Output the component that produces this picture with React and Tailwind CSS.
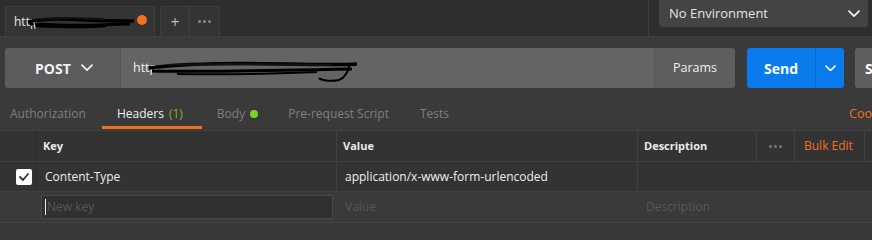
import React from "react";

const Chevron = ({ className = "", stroke = "currentColor", w = 12 }) => (
  <svg width={w} height={w * 0.6} viewBox="0 0 12 7" className={className} fill="none">
    <path d="M1 1l5 5 5-5" stroke={stroke} strokeWidth="1.8" strokeLinecap="round" strokeLinejoin="round" />
  </svg>
);

export default function App() {
  return (
    <div className="w-[872px] h-[240px] overflow-hidden bg-[#3a3a3a] font-['Open_Sans',sans-serif] text-[12px] text-[#e6e6e6]">
      {/* top bar */}
      <div className="flex h-[37px] bg-[#2e2e2e] border-b border-[#3f3f3f]">
        <div className="flex items-end pl-[5px] gap-[5px] shrink-0">
          <div className="relative flex items-center w-[150px] h-[30px] bg-[#343434] border border-b-0 border-[#3f3f3f] rounded-t-[3px] pl-[8px]">
            <span className="text-[12px] text-[#e8e8e8]">http</span>
            <svg className="absolute left-[20px] top-[5px]" width="112" height="22" viewBox="0 0 112 22">
              <path d="M2 10 C20 6, 40 7, 60 8 S90 9, 108 9" stroke="#000" strokeWidth="3.5" fill="none" />
              <path d="M4 12 C25 13, 50 14, 75 13 S95 12, 104 12" stroke="#000" strokeWidth="3" fill="none" />
              <path d="M10 14 C30 15, 55 16, 80 14" stroke="#000" strokeWidth="2.5" fill="none" />
              <path d="M6 8 C20 6, 50 6, 78 7" stroke="#111" strokeWidth="2" fill="none" />
              <path d="M8 10 L9 17" stroke="#ddd" strokeWidth="1" fill="none" />
            </svg>
            <span className="absolute right-[7px] top-[8px] w-[10px] h-[10px] rounded-full bg-[#f37020]" />
          </div>
          <div className="flex h-[30px] bg-[#343434] border border-b-0 border-[#3f3f3f] rounded-t-[3px]">
            <div className="w-[29px] flex items-center justify-center border-r border-[#3f3f3f] text-[#bbb] text-[16px] leading-none">+</div>
            <div className="w-[29px] flex items-center justify-center gap-[2px]">
              <span className="w-[3px] h-[3px] rounded-full bg-[#888]" />
              <span className="w-[3px] h-[3px] rounded-full bg-[#888]" />
              <span className="w-[3px] h-[3px] rounded-full bg-[#888]" />
            </div>
          </div>
        </div>
        <div className="flex-1" />
        <div className="w-px bg-[#3e3e3e]" />
        <div className="ml-[10px] mr-[4px] w-[209px] h-[27px] bg-[#444] rounded-b-[3px] flex items-center justify-between pl-[10px] pr-[8px] shrink-0">
          <span className="text-[13px] text-[#e3e3e3]">No Environment</span>
          <Chevron stroke="#f0f0f0" w={12} />
        </div>
      </div>

      {/* url row */}
      <div className="flex items-start h-[51px] pl-[5px] pt-[11px]">
        <div className="flex h-[40px] w-[730px] shrink-0 rounded-[3px] overflow-hidden">
          <div className="w-[116px] bg-[#5c5c5c] flex items-center pl-[30px] gap-[10px] border-r border-[#555]">
            <span className="text-[14px] font-bold text-[#f2f2f2]">POST</span>
            <Chevron stroke="#f0f0f0" w={12} />
          </div>
          <div className="relative flex-1 bg-[#646464] flex items-center pl-[12px]">
            <span className="text-[12.5px] text-[#f0f0f0]">http</span>
            <svg className="absolute left-[26px] top-[6px]" width="215" height="32" viewBox="0 0 215 32">
              <path d="M2 14 C40 9, 90 9, 140 10 S195 11, 210 10" stroke="#000" strokeWidth="3.5" fill="none" />
              <path d="M5 17 C50 18, 100 17, 150 16 S190 15, 205 15" stroke="#000" strokeWidth="3" fill="none" />
              <path d="M30 20 C80 21, 120 20, 170 18" stroke="#000" strokeWidth="2" fill="none" />
              <path d="M203 10 C201 18, 198 24, 192 26 C182 28, 174 26, 172 24" stroke="#000" strokeWidth="2" fill="none" />
              <path d="M20 11 C60 9, 110 10, 185 11" stroke="#111" strokeWidth="2" fill="none" />
            </svg>
          </div>
          <div className="w-[81px] bg-[#5e5e5e] border-l border-[#555] flex items-center justify-center">
            <span className="text-[12.5px] text-[#eee]">Params</span>
          </div>
        </div>
        <div className="ml-[12px] flex h-[40px] w-[97px] shrink-0 bg-[#097bed] rounded-[3px] overflow-hidden">
          <div className="w-[69px] flex items-center justify-center border-r border-[#0a66c2]">
            <span className="text-[14px] font-bold text-white">Send</span>
          </div>
          <div className="flex-1 flex items-center justify-center">
            <Chevron stroke="#fff" w={11} />
          </div>
        </div>
        <div className="ml-[11px] h-[40px] w-[40px] shrink-0 bg-[#5e5e5e] rounded-l-[3px] flex items-center pl-[10px]">
          <span className="text-[14px] font-bold text-white">S</span>
        </div>
      </div>

      {/* tabs row */}
      <div className="relative flex h-[43px] border-b border-[#404040]">
        <div className="flex h-full text-[12px]">
          <div className="pl-[10px] pr-[16px] h-full flex items-center pt-[10px] text-[#7f7f7f]">Authorization</div>
          <div className="relative pl-[15px] pr-[19px] h-full flex items-center pt-[10px] text-[#f0f0f0]">
            Headers <span className="ml-[5px] text-[#7ab82c]">(1)</span>
            <span className="absolute left-0 right-0 bottom-[1px] h-[3px] bg-[#f37020]" />
          </div>
          <div className="pl-[15px] pr-[30px] h-full flex items-center pt-[10px] text-[#7f7f7f]">
            Body <span className="ml-[5px] w-[8px] h-[8px] rounded-full bg-[#7ed321]" />
          </div>
          <div className="pr-[31px] h-full flex items-center pt-[10px] text-[#7f7f7f]">Pre-request Script</div>
          <div className="h-full flex items-center pt-[10px] text-[#7f7f7f]">Tests</div>
        </div>
        <div className="flex-1" />
        <div className="h-full flex items-center pt-[10px] text-[#f37020] text-[12.5px]">Coo</div>
      </div>

      {/* table */}
      <div className="bg-[#333]">
        <div className="flex h-[31px] border-b border-[#404040] text-[11px] font-bold text-[#eaeaea]">
          <div className="w-[36px] border-r border-[#2a2a2a]" />
          <div className="w-[301px] border-r border-[#404040] flex items-center pl-[7px]">Key</div>
          <div className="w-[301px] border-r border-[#404040] flex items-center pl-[6px]">Value</div>
          <div className="w-[119px] border-r border-[#404040] flex items-center pl-[6px]">Description</div>
          <div className="w-[38px] border-r border-[#404040] flex items-center justify-center gap-[2px]">
            <span className="w-[3px] h-[3px] rounded-full bg-[#777]" />
            <span className="w-[3px] h-[3px] rounded-full bg-[#777]" />
            <span className="w-[3px] h-[3px] rounded-full bg-[#777]" />
          </div>
          <div className="w-[70px] border-r border-[#404040] flex items-center pl-[9px] font-normal text-[12px] text-[#f37020]">Bulk Edit</div>
          <div className="flex-1" />
        </div>
        <div className="flex h-[30px] border-b border-[#404040] text-[12px] text-[#eee]">
          <div className="w-[36px] border-r border-[#2a2a2a] flex items-center justify-end pr-[3px]">
            <div className="w-[16px] h-[16px] rounded-[2px] bg-white flex items-center justify-center">
              <svg width="10" height="8" viewBox="0 0 10 8" fill="none">
                <path d="M1 4l3 3 5-6" stroke="#333" strokeWidth="1.8" strokeLinecap="round" strokeLinejoin="round" />
              </svg>
            </div>
          </div>
          <div className="w-[301px] border-r border-[#404040] flex items-center pl-[9px]">Content-Type</div>
          <div className="w-[301px] border-r border-[#404040] flex items-center pl-[8px]">application/x-www-form-urlencoded</div>
          <div className="flex-1" />
        </div>
        <div className="flex h-[31px] bg-[#3a3a3a] border-b border-[#444] text-[12px] text-[#575757]">
          <div className="w-[36px]" />
          <div className="w-[301px] flex items-center pl-[5px]">
            <div className="w-[292px] h-[24px] bg-[#303030] border border-[#474747] flex items-center pl-[3px]">
              <span className="w-px h-[16px] bg-[#eee] mr-px" />
              <span>New key</span>
            </div>
          </div>
          <div className="w-[301px] flex items-center pl-[8px]">Value</div>
          <div className="flex-1 flex items-center pl-[8px]">Description</div>
        </div>
      </div>
      <div className="h-[20px] bg-[#383838]" />
    </div>
  );
}
